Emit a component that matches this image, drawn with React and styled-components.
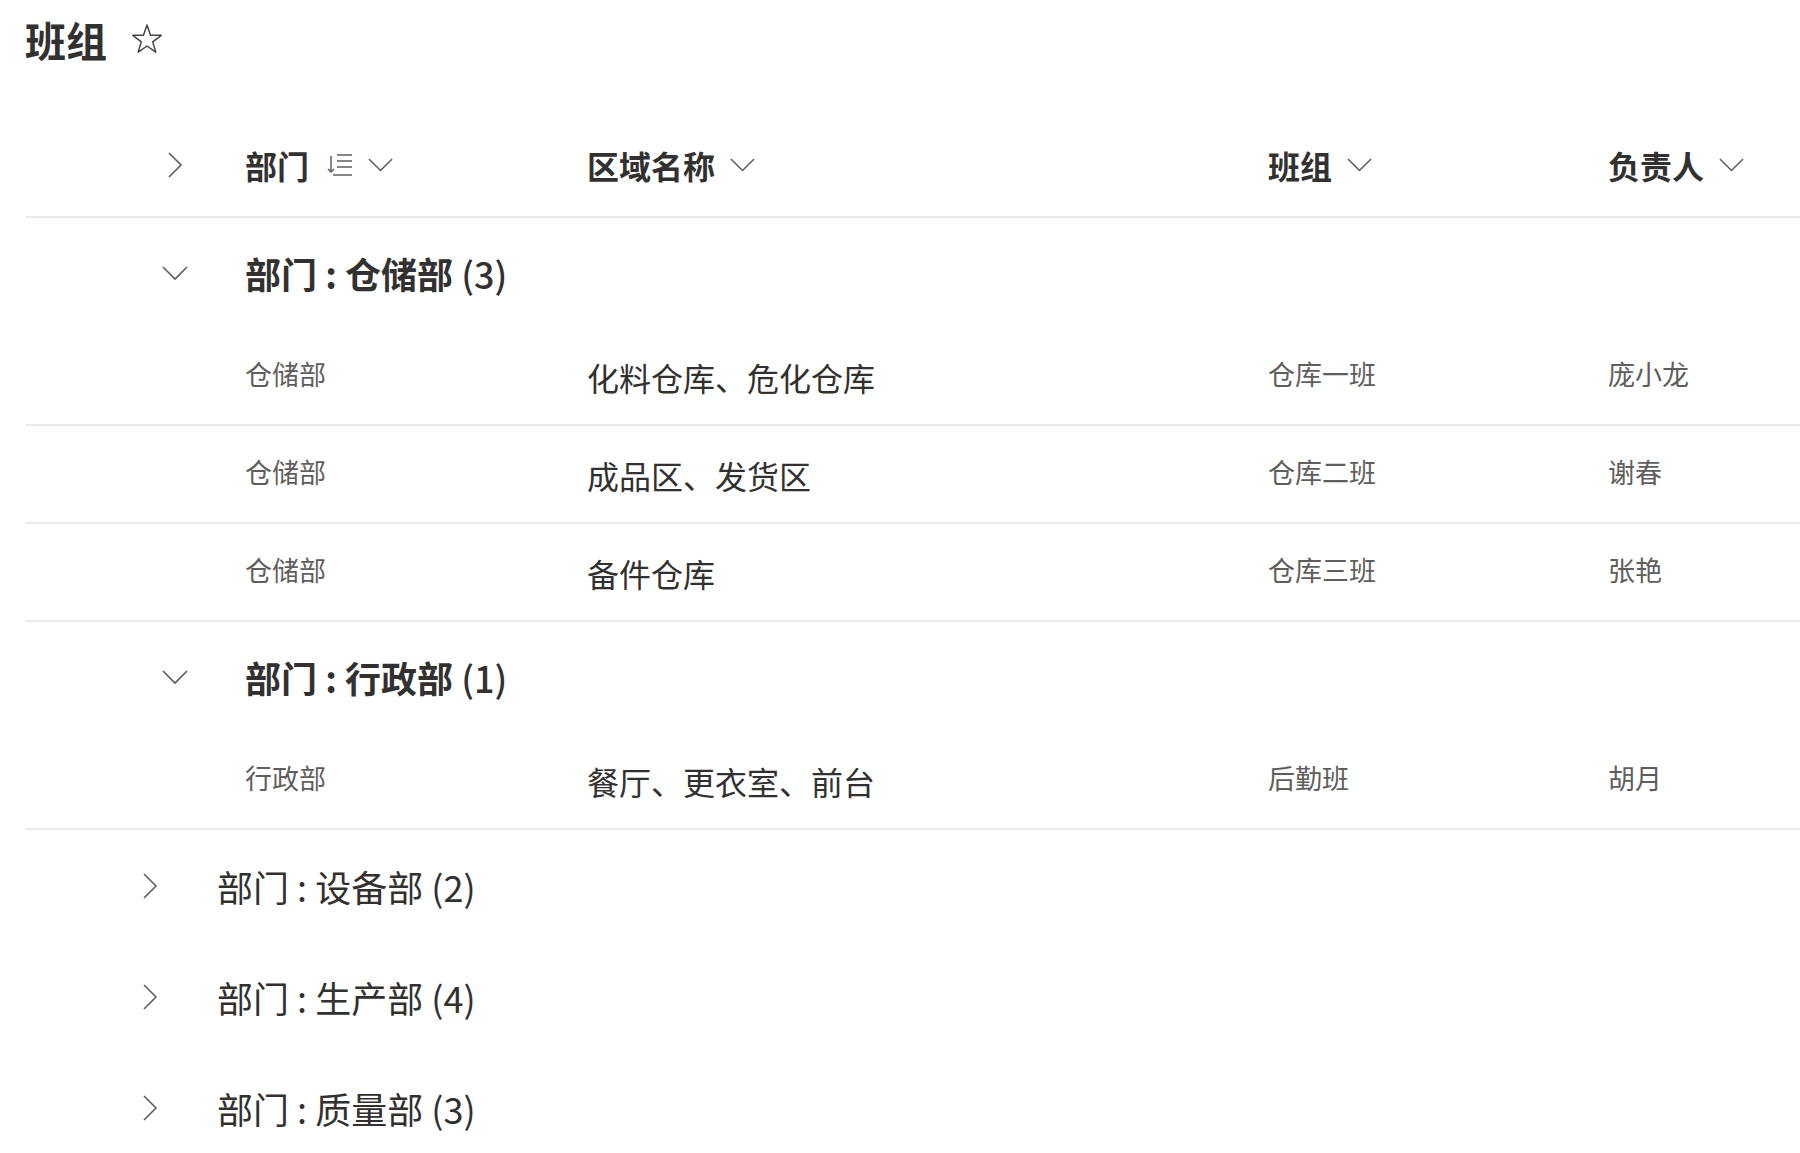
import React from 'react'
import styled, { createGlobalStyle } from 'styled-components'

const GlobalStyle = createGlobalStyle`
  html, body {
    margin: 0;
    padding: 0;
    background: #ffffff;
  }
  body {
    font-family: "Noto Sans CJK SC", "Noto Sans", sans-serif;
    color: #323130;
  }
`

const columns = [
    { key: 'dept', label: '部门', sortable: true },
    { key: 'area', label: '区域名称' },
    { key: 'team', label: '班组' },
    { key: 'owner', label: '负责人' },
]

const groups = [
    {
        name: '仓储部',
        count: 3,
        open: true,
        rows: [
            { dept: '仓储部', area: '化料仓库、危化仓库', team: '仓库一班', owner: '庞小龙' },
            { dept: '仓储部', area: '成品区、发货区', team: '仓库二班', owner: '谢春' },
            { dept: '仓储部', area: '备件仓库', team: '仓库三班', owner: '张艳' },
        ],
    },
    {
        name: '行政部',
        count: 1,
        open: true,
        rows: [
            { dept: '行政部', area: '餐厅、更衣室、前台', team: '后勤班', owner: '胡月' },
        ],
    },
    { name: '设备部', count: 2, open: false, rows: [] },
    { name: '生产部', count: 4, open: false, rows: [] },
    { name: '质量部', count: 3, open: false, rows: [] },
]

const ChevronRight = () => (
    <svg width="16" height="28" viewBox="0 0 16 28">
        <polyline points="2,2 14,14 2,26" fill="none" stroke="#605e5c" strokeWidth="1.6" />
    </svg>
)

const ChevronDown = ({ size = 28 }) => (
    <svg width={size} height={size * 16 / 28} viewBox="0 0 28 16">
        <polyline points="2,2 14,14 26,2" fill="none" stroke="#605e5c" strokeWidth="1.6" />
    </svg>
)

const SortIcon = () => (
    <svg width="26" height="28" viewBox="0 0 26 28">
        <g fill="none" stroke="#605e5c" strokeWidth="1.5">
            <path d="M4 4 V20" />
            <path d="M1 17 L4 20 L7 17" />
            <path d="M10 3 H25" />
            <path d="M10 9 H25" />
            <path d="M10 15 H25" />
            <path d="M6 23 H25" />
        </g>
    </svg>
)

const StarIcon = () => (
    <svg width="32" height="31" viewBox="0 0 32 31">
        <polygon
            points="16,1 19.53,11.15 30.27,11.36 21.71,17.85 24.82,28.14 16,22 7.18,28.14 10.29,17.85 1.73,11.36 12.47,11.15"
            fill="none"
            stroke="#484644"
            strokeWidth="1.5"
            strokeLinejoin="round"
        />
    </svg>
)

export default function App() {
    return (
        <>
            <GlobalStyle />
            <Page>
                <TitleBar>
                    <Title>班组</Title>
                    <StarIcon />
                </TitleBar>

                <HeaderRow>
                    <ToggleCell>
                        <Toggle><ChevronRight /></Toggle>
                    </ToggleCell>
                    {columns.map(col => (
                        <HeaderCell key={col.key}>
                            <span>{col.label}</span>
                            {col.sortable && <SortWrap><SortIcon /></SortWrap>}
                            <ChevronDown size={27} />
                        </HeaderCell>
                    ))}
                    <div />
                </HeaderRow>

                {groups.map(group => (
                    <React.Fragment key={group.name}>
                        <GroupHeader $collapsed={!group.open}>
                            <Toggle>
                                {group.open ? <ChevronDown /> : <ChevronRight />}
                            </Toggle>
                            <GroupTitle $collapsed={!group.open}>
                                部门 : {group.name} <Count $collapsed={!group.open}>({group.count})</Count>
                            </GroupTitle>
                        </GroupHeader>
                        {group.open && group.rows.map((row, i) => (
                            <DataRow key={i}>
                                <div />
                                <Cell>{row.dept}</Cell>
                                <Cell $primary>{row.area}</Cell>
                                <Cell>{row.team}</Cell>
                                <Cell>{row.owner}</Cell>
                                <div />
                            </DataRow>
                        ))}
                    </React.Fragment>
                ))}
            </Page>
        </>
    )
}

const Page = styled.div`
    padding: 14px 0 0 25px;
    min-height: 1153px;
    box-sizing: border-box;
`

const TitleBar = styled.div`
    display: flex;
    align-items: center;
    gap: 24px;
    height: 50px;
`

const Title = styled.h1`
    margin: 0;
    font-size: 41px;
    line-height: 50px;
    font-weight: 700;
    color: #323130;
`

const gridColumns = '220px 342px 681px 340px 1fr'

const HeaderRow = styled.div`
    display: grid;
    grid-template-columns: ${gridColumns};
    align-items: center;
    height: 82px;
    padding-top: 14px;
    margin-top: 56px;
    border-bottom: 2px solid #edebe9;
`

const ToggleCell = styled.div`
    display: flex;
    padding-left: 122px;
`

const Toggle = styled.div`
    width: 56px;
    display: flex;
    align-items: center;
    justify-content: center;
    flex-shrink: 0;
`

const HeaderCell = styled.div`
    display: flex;
    align-items: center;
    gap: 14px;
    font-size: 32px;
    line-height: 40px;
    font-weight: 700;
    color: #323130;
    white-space: nowrap;
    svg {
        display: block;
    }
`

const SortWrap = styled.span`
    display: flex;
    margin-left: 4px;
    margin-top: 2px;
`

const GroupHeader = styled.div`
    display: flex;
    align-items: center;
    height: ${p => (p.$collapsed ? 111 : 110)}px;
    padding-left: ${p => (p.$collapsed ? 97 : 122)}px;
    gap: ${p => (p.$collapsed ? 39 : 42)}px;
`

const GroupTitle = styled.div`
    font-size: 36px;
    line-height: 44px;
    font-weight: ${p => (p.$collapsed ? 400 : 700)};
    color: #323130;
    white-space: nowrap;
`

const Count = styled.span`
    font-weight: ${p => (p.$collapsed ? 400 : 500)};
`

const DataRow = styled.div`
    display: grid;
    grid-template-columns: ${gridColumns};
    align-items: center;
    height: 82px;
    padding-top: 14px;
    border-bottom: 2px solid #edebe9;
`

const Cell = styled.div`
    font-size: ${p => (p.$primary ? 32 : 27)}px;
    line-height: 40px;
    margin-top: ${p => (p.$primary ? 6 : 0)}px;
    color: ${p => (p.$primary ? '#323130' : '#605e5c')};
    white-space: nowrap;
`
